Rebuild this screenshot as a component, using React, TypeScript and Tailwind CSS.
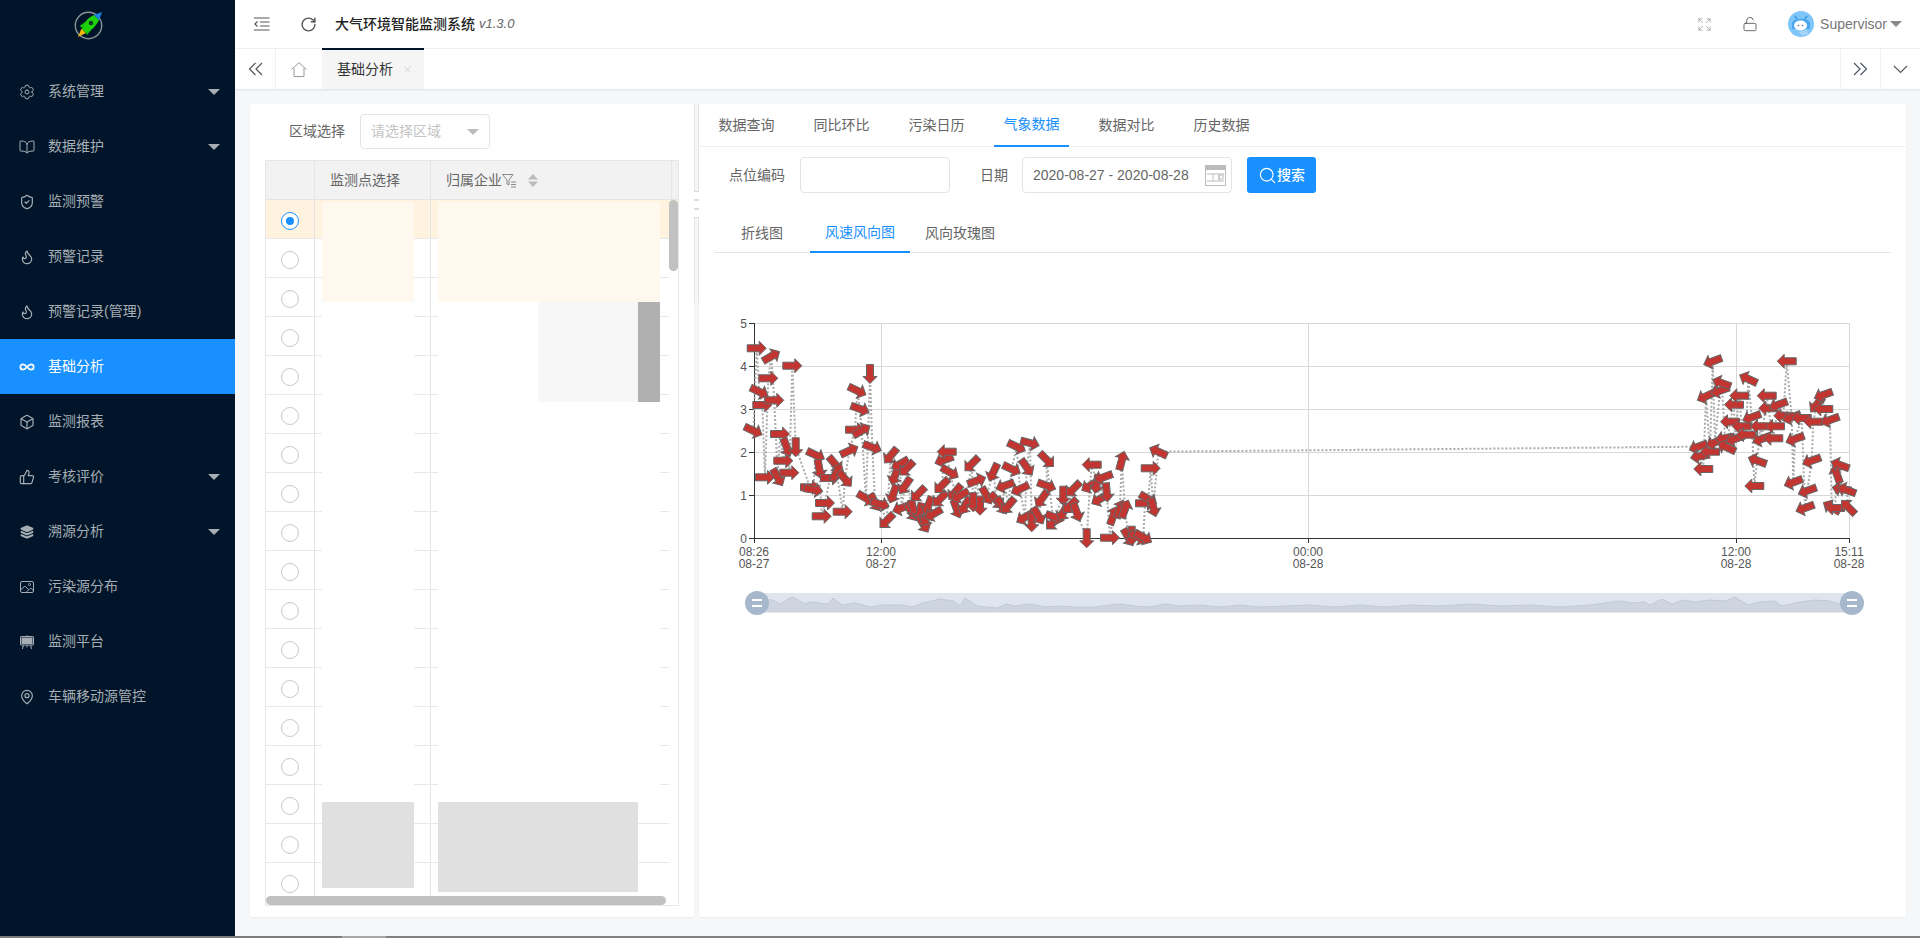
import React from "react";
import { Flame, Infinity as InfinityIcon, Box, ThumbsUp, MapPin, ShieldCheck, RotateCw, X, Search, LockOpen, Expand } from "lucide-react";
import { IoSettingsOutline, IoBookOutline, IoLayers, IoImageOutline, IoEasel } from "react-icons/io5";

const FONT = "font-['Liberation_Sans','Noto_Sans_CJK_SC',sans-serif]";

const stroke = { strokeWidth: 1.8 };
const menu: { label: string; icon: React.ReactNode; caret?: boolean; active?: boolean }[] = [
  { label: "系统管理", icon: <IoSettingsOutline size={16} />, caret: true },
  { label: "数据维护", icon: <IoBookOutline size={16} />, caret: true },
  { label: "监测预警", icon: <ShieldCheck size={16} {...stroke} />, },
  { label: "预警记录", icon: <Flame size={16} {...stroke} /> },
  { label: "预警记录(管理)", icon: <Flame size={16} {...stroke} /> },
  { label: "基础分析", icon: <InfinityIcon size={16} strokeWidth={2.6} />, active: true },
  { label: "监测报表", icon: <Box size={16} {...stroke} /> },
  { label: "考核评价", icon: <ThumbsUp size={16} {...stroke} />, caret: true },
  { label: "溯源分析", icon: <IoLayers size={16} />, caret: true },
  { label: "污染源分布", icon: <IoImageOutline size={16} /> },
  { label: "监测平台", icon: <IoEasel size={16} /> },
  { label: "车辆移动源管控", icon: <MapPin size={16} {...stroke} /> },
];

const leftRaw: [number, number, number][] = [
  [80,118,0],[124,142,-30],[187,170,0],[115,208,0],[88,248,25],[133,274,0],[97,288,0],[70,365,25],[150,375,0],[105,505,0],[143,505,60],[178,491,0],[160,455,0],[170,415,70],[197,415,90],
  [257,438,25],[268,480,80],[240,535,0],[250,542,10],[285,582,0],[275,622,0],[338,608,0],[300,507,0],[315,465,50],[320,490,-60],[345,510,50],[358,425,-25],[375,362,0],[382,245,25],[390,300,20],[395,365,-30],[420,195,90],
  [427,415,20],[408,568,30],[435,580,60],[450,585,15],[470,635,135],[482,440,130],[510,465,150],[530,478,135],[495,500,110],[525,530,125],[490,555,110],[565,555,135],[515,597,160],[550,600,75],[545,610,60],[570,610,100],[580,645,60],[595,590,110],[610,615,150],[590,625,120],[630,570,135],[635,530,135],[650,428,180],[642,453,160],[660,490,30],
  [675,550,130],[690,560,150],[680,600,70],[705,590,120],[725,465,135],[740,515,-20],[730,580,90],[750,590,90],[770,560,60],[790,490,115],[800,575,50],[825,530,160],[815,590,60],[835,590,130],[845,480,25],[860,413,25],[900,402,15],[890,475,55],[870,540,155],[885,625,150],[905,640,90],[925,620,60],[950,530,20],[935,570,125],[950,452,45],
  [975,625,20],[970,640,135],[1000,560,90],[1000,610,120],[1030,540,135],[1020,590,135],[1040,610,70],[1085,467,180],[1080,530,150],[1070,688,90],[1140,686,0],[1120,505,160],[1100,525,100],[1130,550,85],[1110,570,150],[1150,620,-70],[1170,600,-70],[1185,600,-70],[1175,455,-75],[1195,685,60],[1205,680,90],[1225,685,30],[1240,685,30],[1262,478,0],[1285,428,205],[1245,583,0],[1255,570,30],[1270,595,75],
];
const rightRaw: [number, number, number][] = [
  [278,67,160],[500,67,180],[385,120,205],[305,132,200],[300,155,160],[258,172,155],[358,170,180],[440,170,180],[342,197,180],[475,197,160],[445,208,180],[610,168,160],[590,197,130],[610,210,180],[490,230,180],[515,235,160],[545,237,180],[580,248,180],[630,243,160],[395,235,160],[330,248,180],[365,262,180],[420,262,180],[465,262,180],[378,287,180],[460,298,180],[425,300,160],[525,300,160],[345,300,160],[315,298,170],[285,310,155],[320,325,205],[235,323,160],[270,338,180],[240,352,170],[250,390,180],[412,365,200],[575,365,160],[660,378,200],[650,405,250],[680,453,200],[665,450,190],[520,430,160],[562,455,160],[403,441,180],[555,507,160],[635,505,210],[645,507,180],[685,505,225],
];
const points = [
  ...leftRaw.map(([x, y, a]) => [730 + x / 3, 310 + y / 3, a]),
  ...rightRaw.map(([x, y, a]) => [1620 + x / 3, 340 + y / 3, a]),
].sort((p, q) => p[0] - q[0]);

const shadowTop: [number, number][] = [
  [757,600],[773,601],[780,605],[788,600],[793,598],[805,605],[810,603],[820,604],[828,605],[833,599],[842,606],[855,604],[870,608],[883,606],[903,606],[912,608],[923,604],[940,600],[953,602],[960,607],[965,599],[977,607],[997,609],[1007,605],[1014,607],[1030,605],[1045,608],[1060,607],[1075,608],[1095,608],[1110,606],[1120,605],[1135,607],[1150,608],[1165,605],[1180,607],[1200,606],[1220,608],[1240,606],[1260,608],[1285,607],[1310,606],[1335,608],[1360,606],[1385,608],[1410,606],[1440,607],[1470,605],[1500,607],[1530,606],[1560,608],[1590,606],[1620,602],[1632,604],[1645,603],[1650,606],[1662,600],[1672,605],[1683,601],[1695,603],[1710,601],[1725,602],[1735,598],[1748,606],[1760,603],[1775,602],[1782,607],[1800,603],[1815,601],[1830,602],[1840,605],[1852,604],
];

const yTicks = [324, 367, 410, 453, 496, 539];
const xTicks: [number, string, string][] = [[754,"08:26","08-27"],[881,"12:00","08-27"],[1308,"00:00","08-28"],[1736,"12:00","08-28"],[1849,"15:11","08-28"]];

function Chart() {
  return (
    <svg viewBox="699 254 1207 400" className="block w-[1207px] h-[400px]" fontFamily="'Liberation Sans',sans-serif">
      {yTicks.slice(0, 5).map((y) => <line key={y} x1={754} x2={1849} y1={y + 0.5} y2={y + 0.5} stroke="#d8d8d8" />)}
      {xTicks.slice(1).map(([x]) => <line key={x} x1={x + 0.5} x2={x + 0.5} y1={324} y2={539} stroke="#d8d8d8" />)}
      <line x1={754.5} x2={754.5} y1={324} y2={540} stroke="#333" />
      <line x1={754} x2={1850} y1={539.5} y2={539.5} stroke="#333" />
      {yTicks.map((y, i) => (
        <g key={y}>
          <line x1={749} x2={754} y1={y + 0.5} y2={y + 0.5} stroke="#333" />
          <text x={747} y={y + 4.5} textAnchor="end" fontSize="12" fill="#555">{5 - i}</text>
        </g>
      ))}
      {xTicks.map(([x, a, b]) => (
        <g key={x}>
          <line x1={x + 0.5} x2={x + 0.5} y1={539} y2={544} stroke="#333" />
          <text x={x} y={557} textAnchor="middle" fontSize="12" fill="#555">{a}</text>
          <text x={x} y={569} textAnchor="middle" fontSize="12" fill="#555">{b}</text>
        </g>
      ))}
      <polyline fill="none" stroke="#aaa" strokeWidth="2" strokeDasharray="2 2" points={points.map((p) => `${p[0].toFixed(1)},${p[1].toFixed(1)}`).join(" ")} />
      {points.map((p, i) => (
        <path key={i} transform={`translate(${p[0].toFixed(1)} ${p[1].toFixed(1)}) rotate(${p[2]})`} d="M-9.5 -3.5H2.5V-7L9.5 0L2.5 7V3.5H-9.5Z" fill="#c23531" stroke="#666" strokeWidth="1" />
      ))}
      <rect x={757} y={594} width={1095} height={19.5} fill="#ced5e1" />
      <path d={`M757 594 ${shadowTop.map(([x, y]) => `L${x} ${y}`).join(" ")} L1852 594Z`} fill="#dfe5ee" />
      <polyline fill="none" stroke="#bcc4d0" strokeWidth="0.8" points={shadowTop.map(([x, y]) => `${x},${y}`).join(" ")} />
      {[757, 1852].map((x) => (
        <g key={x}>
          <circle cx={x} cy={604} r={12} fill="#a7b7cc" />
          <rect x={x - 5} y={600} width={10} height={2} fill="#fff" />
          <rect x={x - 5} y={606} width={10} height={2} fill="#fff" />
        </g>
      ))}
    </svg>
  );
}

function Logo() {
  return (
    <svg width="32" height="32" viewBox="0 0 32 32">
      <circle cx="15.5" cy="16.5" r="13.2" fill="none" stroke="#8b9299" strokeWidth="1.4" />
      <path d="M5 28 L8.5 19.5 L13 24Z" fill="#f5b50f" />
      <path d="M9 20 C10 14 16 8 21 6 L26 11 C24 16 18 22 13 24Z" fill="#1fd30b" />
      <path d="M21 6 L29 3 L26 11Z" fill="#1a86e8" />
      <path d="M6.5 17 L12 13 L10.5 19.5Z M14 26 L19 20 L12.5 23.5Z" fill="#12c008" />
      <circle cx="18" cy="14" r="2.3" fill="#0b3a24" />
    </svg>
  );
}

function Avatar() {
  return (
    <svg width="26" height="26" viewBox="0 0 26 26">
      <circle cx="13" cy="13" r="13" fill="#7ec5f8" />
      <path d="M7 5 L9 8 M19 5 L17 8" stroke="#3d97e0" strokeWidth="1.5" />
      <path d="M4 13 C4 6 22 6 22 13 V18 H4Z" fill="#4aa5ec" />
      <ellipse cx="12.5" cy="14.5" rx="6.5" ry="5" fill="#fff" />
      <circle cx="10.5" cy="14.5" r="0.8" fill="#4a6a8a" />
      <circle cx="14.5" cy="14.5" r="0.8" fill="#4a6a8a" />
      <path d="M11 21 L19 19 L21 23 L14 25Z" fill="#a5d5f8" />
    </svg>
  );
}

function Outline({ className }: { className?: string }) {
  return (
    <svg width="16" height="14" viewBox="0 0 16 14" className={className} fill="none" stroke="#555" strokeWidth="1.2">
      <path d="M0 1H15.5M6 5H15.5M6 9H15.5M0 13H15.5" />
      <path d="M3.5 4.5 L0.8 7 L3.5 9.5" />
    </svg>
  );
}

function Caret({ className }: { className: string }) {
  return <span className={`inline-block w-0 h-0 border-x-[6px] border-x-transparent border-t-[6px] ${className}`} />;
}

function Sidebar() {
  return (
    <aside className="w-[235px] shrink-0 bg-[#001529] flex flex-col">
      <div className="h-[64px] flex items-start pt-[9px] pl-[73px]"><Logo /></div>
      {menu.map(({ label, icon, caret, active }) => (
        <div key={label} className={`h-[55px] flex items-center pl-[19px] pr-[15px] text-[14px] ${active ? "bg-[#1890ff] text-white" : "text-[#a6adb4]"}`}>
          <span className="w-[16px] h-[16px] shrink-0 flex items-center justify-center">{icon}</span>
          <span className="ml-[13px] flex-1">{label}</span>
          {caret && <Caret className="border-t-[#a6adb4]" />}
        </div>
      ))}
    </aside>
  );
}

function TopBar() {
  return (
    <header className="h-[49px] shrink-0 bg-white border-b border-[#f0f0f0] flex items-center text-[#333]">
      <Outline className="ml-[19px]" />
      <RotateCw size={17} strokeWidth={2} className="ml-[30px] text-[#555]" />
      <span className="ml-[18px] text-[14px] font-medium text-[#222]">大气环境智能监测系统</span>
      <span className="ml-[4px] text-[13px] italic text-[#666]">v1.3.0</span>
      <div className="flex-1" />
      <Expand size={15} strokeWidth={1.2} className="text-[#999]" />
      <LockOpen size={16} strokeWidth={1.3} className="ml-[30px] text-[#555]" />
      <span className="ml-[30px]"><Avatar /></span>
      <span className="ml-[6px] text-[14px] text-[#777]">Supervisor</span>
      <Caret className="ml-[3px] border-t-[#888] mr-[18px]" />
    </header>
  );
}

function TabBar() {
  return (
    <div className="h-[40px] shrink-0 bg-white flex items-stretch shadow-[0_1px_2px_rgba(0,0,0,0.1)] z-10">
      <div className="w-[41px] border-r border-[#f0f0f0] flex items-center justify-center">
        <svg width="15" height="14" viewBox="0 0 15 14" fill="none" stroke="#555" strokeWidth="1.2"><path d="M7.5 1L1.5 7L7.5 13M14 1L8 7L14 13" /></svg>
      </div>
      <div className="w-[46px] flex items-center justify-center">
        <svg width="16" height="15" viewBox="0 0 16 15" fill="none" stroke="#999" strokeWidth="1"><path d="M0.5 7.5L8 0.7L15.5 7.5M3 6V14.5H13V6" /></svg>
      </div>
      <div className="w-[102px] bg-[#f5f5f5] border-t-2 border-[#001529] -mt-px flex items-center pl-[15px] text-[14px] text-[#333]">
        基础分析
        <X size={11} strokeWidth={1} className="ml-[9px] text-[#aaa]" />
      </div>
      <div className="flex-1" />
      <div className="w-[40px] border-l border-[#f0f0f0] flex items-center justify-center">
        <svg width="15" height="14" viewBox="0 0 15 14" fill="none" stroke="#4b5563" strokeWidth="1.2"><path d="M1 1L7 7L1 13M7.5 1L13.5 7L7.5 13" /></svg>
      </div>
      <div className="w-[40px] border-l border-[#f0f0f0] flex items-center justify-center">
        <svg width="15" height="9" viewBox="0 0 15 9" fill="none" stroke="#555" strokeWidth="1.1"><path d="M1 1L7.5 7.5L14 1" /></svg>
      </div>
    </div>
  );
}

function Radio({ checked }: { checked?: boolean }) {
  return (
    <span className={`w-[18px] h-[18px] rounded-full border-[1.5px] bg-white flex items-center justify-center ${checked ? "border-[#1890ff]" : "border-[#c8c8c8]"}`}>
      {checked && <span className="w-[8px] h-[8px] rounded-full bg-[#1890ff]" />}
    </span>
  );
}

function LeftPanel() {
  return (
    <section className="w-[444px] shrink-0 bg-white rounded-[2px] shadow-[0_1px_2px_rgba(0,0,0,0.05)] flex flex-col">
      <div className="h-[56px] flex items-start pt-[10px] pl-[39px] shrink-0">
        <span className="text-[14px] text-[#666] leading-[35px]">区域选择</span>
        <div className="ml-[15px] w-[130px] h-[35px] border border-[#e4e4e4] rounded-[4px] flex items-center pl-[10px] pr-[10px] justify-between">
          <span className="text-[14px] text-[#c4c4c4]">请选择区域</span>
          <Caret className="border-t-[#bdbdbd]" />
        </div>
      </div>
      <div className="relative ml-[15px] w-[414px] h-[746px] border border-[#e6e6e6] flex flex-col">
        <div className="h-[39px] shrink-0 flex bg-[#f2f2f2] border-b border-[#e4e4e4] text-[14px] text-[#666]">
          <div className="w-[49px] border-r border-[#e4e4e4]" />
          <div className="w-[116px] border-r border-[#e4e4e4] flex items-center pl-[15px]">监测点选择</div>
          <div className="w-[241px] border-r border-[#e4e4e4] flex items-center pl-[15px]">
            归属企业
            <svg width="15" height="15" viewBox="0 0 15 15" fill="none" stroke="#888" strokeWidth="1"><path d="M0.5 1.5H11L7 7V12L5 11V7Z" /><path d="M9 9H14M9 11.5H14M9 14H14" /></svg>
            <svg width="10" height="13" viewBox="0 0 10 13" className="ml-[11px]" fill="#bbb"><path d="M5 0L10 5.5H0Z" /><path d="M5 13L10 7.5H0Z" /></svg>
          </div>
        </div>
        <div className="h-[696px] shrink-0 overflow-hidden">
          {Array.from({ length: 18 }).map((_, i) => (
            <div key={i} className={`h-[39px] flex border-b border-[#e8e8e8] ${i === 0 ? "bg-[#fff3e0]" : "bg-white mr-[9px]"}`}>
              <div className="w-[49px] border-r border-[#e4e4e4] flex justify-center pt-[12px]"><Radio checked={i === 0} /></div>
              <div className="w-[116px] border-r border-[#e4e4e4]" />
            </div>
          ))}
        </div>
        <div className="h-[9px] w-[400px] bg-[#c1c1c1] rounded-[5px]" />
        {/* masked table cells */}
        <div className="absolute left-[56px] top-[41px] w-[92px] h-[100px] bg-[#fff8ee]" />
        <div className="absolute left-[172px] top-[41px] w-[222px] h-[100px] bg-[#fff8ee]" />
        <div className="absolute left-[56px] top-[141px] w-[92px] h-[500px] bg-white" />
        <div className="absolute left-[172px] top-[141px] w-[222px] h-[500px] bg-white" />
        <div className="absolute left-[272px] top-[141px] w-[100px] h-[100px] bg-[#f7f7f7]" />
        <div className="absolute left-[372px] top-[141px] w-[22px] h-[100px] bg-[#b0b0b0]" />
        <div className="absolute left-[56px] top-[641px] w-[92px] h-[86px] bg-[#e0e0e0]" />
        <div className="absolute left-[172px] top-[641px] w-[200px] h-[90px] bg-[#e0e0e0]" />
        <div className="absolute left-[403px] top-[39px] w-[9px] h-[71px] bg-[#c1c1c1] rounded-[5px]" />
      </div>
    </section>
  );
}

function Splitter() {
  return (
    <div className="w-[5px] h-[199px] shrink-0 bg-[#f6f6f6] border-x border-[#e4e4e4] relative">
      {[87, 96, 105].map((t, i) => (
        <div key={i} className="absolute -left-px w-[5px] h-[9px] border-y border-[#dcdcdc] bg-white" style={{ top: t }} />
      ))}
    </div>
  );
}

function RightPanel() {
  const tabs = ["数据查询", "同比环比", "污染日历", "气象数据", "数据对比", "历史数据"];
  const subs = ["折线图", "风速风向图", "风向玫瑰图"];
  return (
    <section className="flex-1 min-w-0 bg-white rounded-[2px] shadow-[0_1px_2px_rgba(0,0,0,0.05)] flex flex-col">
      <div className="h-[43px] shrink-0 border-b border-[#f0f0f0] flex pl-[10px]">
        {tabs.map((t) => (
          <div key={t} className={`w-[75px] mr-[20px] h-[43px] flex items-center justify-center text-[14px] ${t === "气象数据" ? "text-[#1890ff] border-b-2 border-[#1890ff]" : "text-[#666]"}`}>{t}</div>
        ))}
      </div>
      <div className="h-[36px] mt-[10px] shrink-0 flex items-center text-[14px] text-[#666]">
        <span className="ml-[30px]">点位编码</span>
        <div className="ml-[15px] w-[150px] h-[36px] border border-[#e4e4e4] rounded-[4px]" />
        <span className="ml-[30px]">日期</span>
        <div className="ml-[14px] w-[210px] h-[36px] border border-[#e4e4e4] rounded-[4px] flex items-center pl-[10px] pr-[5px] justify-between text-[#666]">
          <span>2020-08-27 - 2020-08-28</span>
          <svg width="21" height="21" viewBox="0 0 21 21" fill="none" stroke="#bbb"><rect x="0.5" y="0.5" width="20" height="20" /><rect x="0" y="0" width="21" height="5" fill="#bbb" stroke="none" /><path d="M2 9H19M2 16H19M8 9V16M14 9V16" /><rect x="14" y="10" width="4" height="4" /></svg>
        </div>
        <div className="ml-[15px] w-[69px] h-[36px] bg-[#1890ff] rounded-[3px] flex items-center justify-center text-white font-medium">
          <Search size={19} strokeWidth={1.5} />
          <span>搜索</span>
        </div>
      </div>
      <div className="mt-[20px] mx-[15px] h-[40px] w-[1177px] shrink-0 border-b border-[#e4e4e4] flex">
        {subs.map((t) => (
          <div key={t} className={`h-[40px] px-[15px] flex items-center text-[14px] ${t === "风速风向图" ? "text-[#1890ff] border-b-2 border-[#1890ff]" : "text-[#666]"} ${t === "折线图" ? "mr-[12px] ml-[12px]" : ""}`}>{t}</div>
        ))}
      </div>
      <Chart />
    </section>
  );
}

export default function App() {
  return (
    <div className={`h-[938px] w-[1920px] overflow-hidden flex flex-col ${FONT}`}>
      <div className="h-[936px] flex">
        <Sidebar />
        <main className="flex-1 min-w-0 bg-[#f5f7f9] flex flex-col">
          <TopBar />
          <TabBar />
          <div className="flex-1 min-h-0 flex pt-[15px] pl-[15px] pr-[14px] pb-[19px]">
            <LeftPanel />
            <Splitter />
            <RightPanel />
          </div>
        </main>
      </div>
      <div className="h-[2px] shrink-0 flex">
        <div className="w-[342px] bg-[#7d7d7d]" />
        <div className="w-[44px] bg-[#a8a8a8]" />
        <div className="flex-1 bg-[#808080]" />
      </div>
    </div>
  );
}
